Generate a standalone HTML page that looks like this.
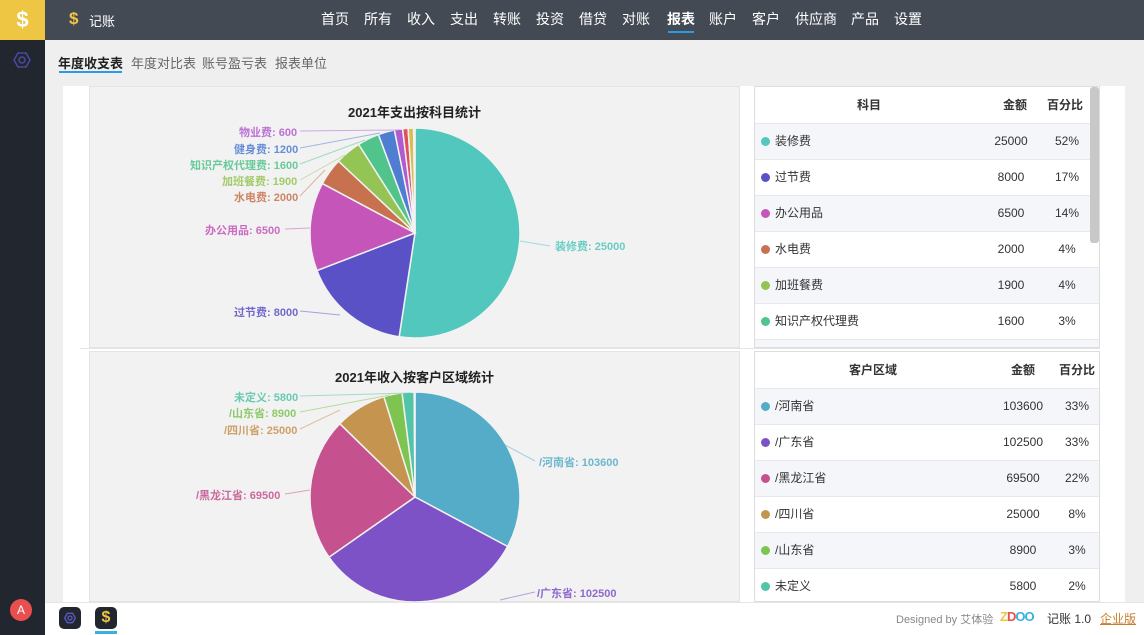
<!DOCTYPE html>
<html><head><meta charset="utf-8">
<style>
*{margin:0;padding:0;box-sizing:border-box}
body{width:1144px;height:635px;overflow:hidden;background:#efefef;font-family:"Liberation Sans","Noto Sans CJK SC",sans-serif;position:relative;font-size:12px;color:#333}
.abs{position:absolute}
#side{left:0;top:0;width:45px;height:635px;background:#22272f}
#logo{left:0;top:0;width:45px;height:40px;background:#eec643;color:#fff;font-weight:bold;font-size:22px;text-align:center;line-height:40px}
#hdr{left:45px;top:0;width:1099px;height:40px;background:#434a54}
.nav{position:absolute;top:0;line-height:38px;color:#fff;font-size:14px}
.tab{position:absolute;top:53px;font-size:13px;color:#666}
#panel{left:63px;top:86px;width:1062px;height:516px;background:#fff}
.chart{position:absolute;left:89px;width:651px;background:#f2f2f2;border:1px solid #e4e4e4}
.tbl{position:absolute;left:754px;width:346px;border:1px solid #ddd;background:#fff;overflow:hidden}
.row{height:36px;border-bottom:1px solid #e6e8ee;position:relative;font-size:12px;line-height:35px}
.row.alt{background:#f5f6fa}
.row .n{position:absolute;left:20px}
.row .d{position:absolute;left:6px;top:13px;width:9px;height:9px;border-radius:50%}
.row .a{position:absolute;width:60px;text-align:center}
.row .p{position:absolute;width:50px;text-align:center}
.lbl{position:absolute;font-size:11px;white-space:nowrap;font-weight:bold;opacity:.85}
#foot{left:45px;top:602px;width:1099px;height:33px;background:#fff;border-top:1px solid #e5e5e5}
</style></head><body>
<div id="side" class="abs"></div>
<div id="logo" class="abs">$</div>
<svg class="abs" style="left:13px;top:51px" width="18" height="18" viewBox="0 0 18 18"><polygon points="5,2 13,2 17,9 13,16 5,16 1,9" fill="none" stroke="#4a4aa0" stroke-width="1.5"/><circle cx="9" cy="9" r="3" fill="none" stroke="#4a4aa0" stroke-width="1.5"/></svg>
<div class="abs" style="left:10px;top:599px;width:22px;height:22px;border-radius:50%;background:#e94f4f;color:#fff;text-align:center;line-height:22px;font-size:12px">A</div>
<div id="hdr" class="abs"></div>
<div class="abs" style="left:69px;top:9px;color:#eec643;font-weight:bold;font-size:17px">$</div>
<div class="abs" style="left:89px;top:11px;color:#fff;font-size:13px">记账</div>
<div class="nav" style="left:321px">首页</div><div class="nav" style="left:364px">所有</div><div class="nav" style="left:407px">收入</div><div class="nav" style="left:450px">支出</div><div class="nav" style="left:493px">转账</div><div class="nav" style="left:536px">投资</div><div class="nav" style="left:579px">借贷</div><div class="nav" style="left:622px">对账</div><div class="nav" style="left:667px;font-weight:bold">报表</div><div class="abs" style="left:668px;top:31px;width:26px;height:2px;background:#2a9be8"></div><div class="nav" style="left:709px">账户</div><div class="nav" style="left:752px">客户</div><div class="nav" style="left:795px">供应商</div><div class="nav" style="left:851px">产品</div><div class="nav" style="left:894px">设置</div>
<div class="tab" style="left:58px;color:#222;font-weight:bold">年度收支表</div><div class="abs" style="left:59px;top:71px;width:63px;height:2px;background:#2a9be8"></div>
<div class="tab" style="left:131px">年度对比表</div><div class="tab" style="left:202px">账号盈亏表</div><div class="tab" style="left:275px">报表单位</div>
<div id="panel" class="abs"></div>
<div class="abs" style="left:80px;top:348px;width:1020px;height:1px;background:#e4e4e4"></div>
<div class="chart" style="top:86px;height:262px"></div>
<div class="chart" style="top:351px;height:251px"></div>
<div class="abs" style="left:89px;top:102px;width:651px;text-align:center;font-size:13px;font-weight:bold;color:#222">2021年支出按科目统计</div>
<div class="abs" style="left:89px;top:367px;width:651px;text-align:center;font-size:13px;font-weight:bold;color:#222">2021年收入按客户区域统计</div>
<svg id="pies" class="abs" style="left:0;top:0" width="1144" height="635"></svg>
<div class="lbl" style="left:239px;top:124px;color:#b15bd0">物业费: 600</div>
<div class="lbl" style="left:234px;top:141px;color:#4e7dd1">健身费: 1200</div>
<div class="lbl" style="left:190px;top:157px;color:#50c48a">知识产权代理费: 1600</div>
<div class="lbl" style="left:222px;top:173px;color:#94c454">加班餐费: 1900</div>
<div class="lbl" style="left:234px;top:189px;color:#c8714f">水电费: 2000</div>
<div class="lbl" style="left:205px;top:222px;color:#c555b8">办公用品: 6500</div>
<div class="lbl" style="left:555px;top:238px;color:#52c7bd">装修费: 25000</div>
<div class="lbl" style="left:234px;top:304px;color:#5b51c6">过节费: 8000</div>
<div class="lbl" style="left:234px;top:389px;color:#52c4a8">未定义: 5800</div>
<div class="lbl" style="left:229px;top:405px;color:#7dc450">/山东省: 8900</div>
<div class="lbl" style="left:224px;top:422px;color:#c5944f">/四川省: 25000</div>
<div class="lbl" style="left:196px;top:487px;color:#c5528f">/黑龙江省: 69500</div>
<div class="lbl" style="left:539px;top:454px;color:#55acc8">/河南省: 103600</div>
<div class="lbl" style="left:537px;top:585px;color:#7c52c6">/广东省: 102500</div>
<div class="tbl" style="top:86px;height:262px">
<div class="row" style="font-weight:bold;height:37px;line-height:37px"><span class="a" style="left:84px">科目</span><span class="a" style="left:230px">金额</span><span class="p" style="left:285px">百分比</span></div>
<div class="row alt"><span class="d" style="background:#52c7bd"></span><span class="n">装修费</span><span class="a" style="left:226px">25000</span><span class="p" style="left:287px">52%</span></div>
<div class="row"><span class="d" style="background:#5b51c6"></span><span class="n">过节费</span><span class="a" style="left:226px">8000</span><span class="p" style="left:287px">17%</span></div>
<div class="row alt"><span class="d" style="background:#c555b8"></span><span class="n">办公用品</span><span class="a" style="left:226px">6500</span><span class="p" style="left:287px">14%</span></div>
<div class="row"><span class="d" style="background:#c8714f"></span><span class="n">水电费</span><span class="a" style="left:226px">2000</span><span class="p" style="left:287px">4%</span></div>
<div class="row alt"><span class="d" style="background:#94c454"></span><span class="n">加班餐费</span><span class="a" style="left:226px">1900</span><span class="p" style="left:287px">4%</span></div>
<div class="row"><span class="d" style="background:#50c48a"></span><span class="n">知识产权代理费</span><span class="a" style="left:226px">1600</span><span class="p" style="left:287px">3%</span></div>
<div class="row alt"></div>
<div class="abs" style="left:335px;top:0;width:9px;height:156px;background:#c8c8c8;border-radius:3px"></div>
</div>
<div class="tbl" style="top:351px;height:251px">
<div class="row" style="font-weight:bold;height:37px;line-height:37px"><span class="a" style="left:88px;width:60px">客户区域</span><span class="a" style="left:238px">金额</span><span class="p" style="left:297px">百分比</span></div>
<div class="row alt"><span class="d" style="background:#55acc8"></span><span class="n">/河南省</span><span class="a" style="left:238px">103600</span><span class="p" style="left:297px">33%</span></div>
<div class="row"><span class="d" style="background:#7c52c6"></span><span class="n">/广东省</span><span class="a" style="left:238px">102500</span><span class="p" style="left:297px">33%</span></div>
<div class="row alt"><span class="d" style="background:#c5528f"></span><span class="n">/黑龙江省</span><span class="a" style="left:238px">69500</span><span class="p" style="left:297px">22%</span></div>
<div class="row"><span class="d" style="background:#c5944f"></span><span class="n">/四川省</span><span class="a" style="left:238px">25000</span><span class="p" style="left:297px">8%</span></div>
<div class="row alt"><span class="d" style="background:#7dc450"></span><span class="n">/山东省</span><span class="a" style="left:238px">8900</span><span class="p" style="left:297px">3%</span></div>
<div class="row"><span class="d" style="background:#52c4a8"></span><span class="n">未定义</span><span class="a" style="left:238px">5800</span><span class="p" style="left:297px">2%</span></div>
</div>
<div id="foot" class="abs"></div>
<div class="abs" style="left:59px;top:607px;width:22px;height:22px;border-radius:5px;background:#22272f"></div>
<svg class="abs" style="left:64px;top:612px" width="12" height="12" viewBox="0 0 18 18"><polygon points="5,2 13,2 17,9 13,16 5,16 1,9" fill="none" stroke="#5a5ac0" stroke-width="2"/><circle cx="9" cy="9" r="3" fill="none" stroke="#5a5ac0" stroke-width="2"/></svg>
<div class="abs" style="left:95px;top:607px;width:22px;height:22px;border-radius:5px;background:#22272f;color:#eec643;font-weight:bold;text-align:center;line-height:22px;font-size:16px">$</div>
<div class="abs" style="left:95px;top:631px;width:22px;height:3px;background:#3ab0e0"></div>
<div class="abs" style="left:896px;top:611px;font-size:11px;color:#888">Designed by 艾体验</div>
<div class="abs" style="left:1000px;top:609px;font-size:13px;font-weight:bold;letter-spacing:-1px"><span style="color:#eec643">Z</span><span style="color:#e94f4f">D</span><span style="color:#3ab0e0">OO</span></div>
<div class="abs" style="left:1047px;top:610px;font-size:12px;color:#333">记账 1.0</div>
<div class="abs" style="left:1100px;top:610px;font-size:12px;color:#c87f2a;text-decoration:underline">企业版</div>
<script>
function pie(cx,cy,r,vals,cols){var t=vals.reduce((a,b)=>a+b,0),a=-Math.PI/2,s='';
for(var i=0;i<vals.length;i++){var b=a+vals[i]/t*2*Math.PI;var x1=cx+r*Math.cos(a),y1=cy+r*Math.sin(a),x2=cx+r*Math.cos(b),y2=cy+r*Math.sin(b);
s+='<path d="M'+cx+','+cy+' L'+x1.toFixed(2)+','+y1.toFixed(2)+' A'+r+','+r+' 0 '+((b-a)>Math.PI?1:0)+' 1 '+x2.toFixed(2)+','+y2.toFixed(2)+' Z" fill="'+cols[i]+'" stroke="#f2f2f2" stroke-width="1.5"/>';a=b;}return s;}
var s='';
s+=pie(415,233,105,[25000,8000,6500,2000,1900,1600,1200,600,400,400,100],['#52c7bd','#5b51c6','#c555b8','#c8714f','#94c454','#50c48a','#4e7dd1','#b15bd0','#e05060','#d4c050','#8ad0c8']);
s+=pie(415,497,105,[103600,102500,69500,25000,8900,5800,400],['#55acc8','#7c52c6','#c5528f','#c5944f','#7dc450','#52c4a8','#a0d8e0']);
var L=[['#52c7bd',520,241,550,246],['#5b51c6',340,315,300,311],['#c555b8',310,228,285,229],['#c8714f',325,170,300,196],['#94c454',345,155,300,180],['#50c48a',365,140,300,164],['#4e7dd1',380,133,300,148],['#b15bd0',400,130,300,131],
['#55acc8',505,445,535,461],['#7c52c6',500,600,535,592],['#c5528f',310,490,285,494],['#c5944f',340,410,300,429],['#7dc450',390,395,300,412],['#52c4a8',410,393,300,396]];
L.forEach(function(l){s+='<line x1="'+l[1]+'" y1="'+l[2]+'" x2="'+l[3]+'" y2="'+l[4]+'" stroke="'+l[0]+'" stroke-opacity="0.5"/>';});
document.getElementById('pies').innerHTML=s;
</script>
</body></html>
